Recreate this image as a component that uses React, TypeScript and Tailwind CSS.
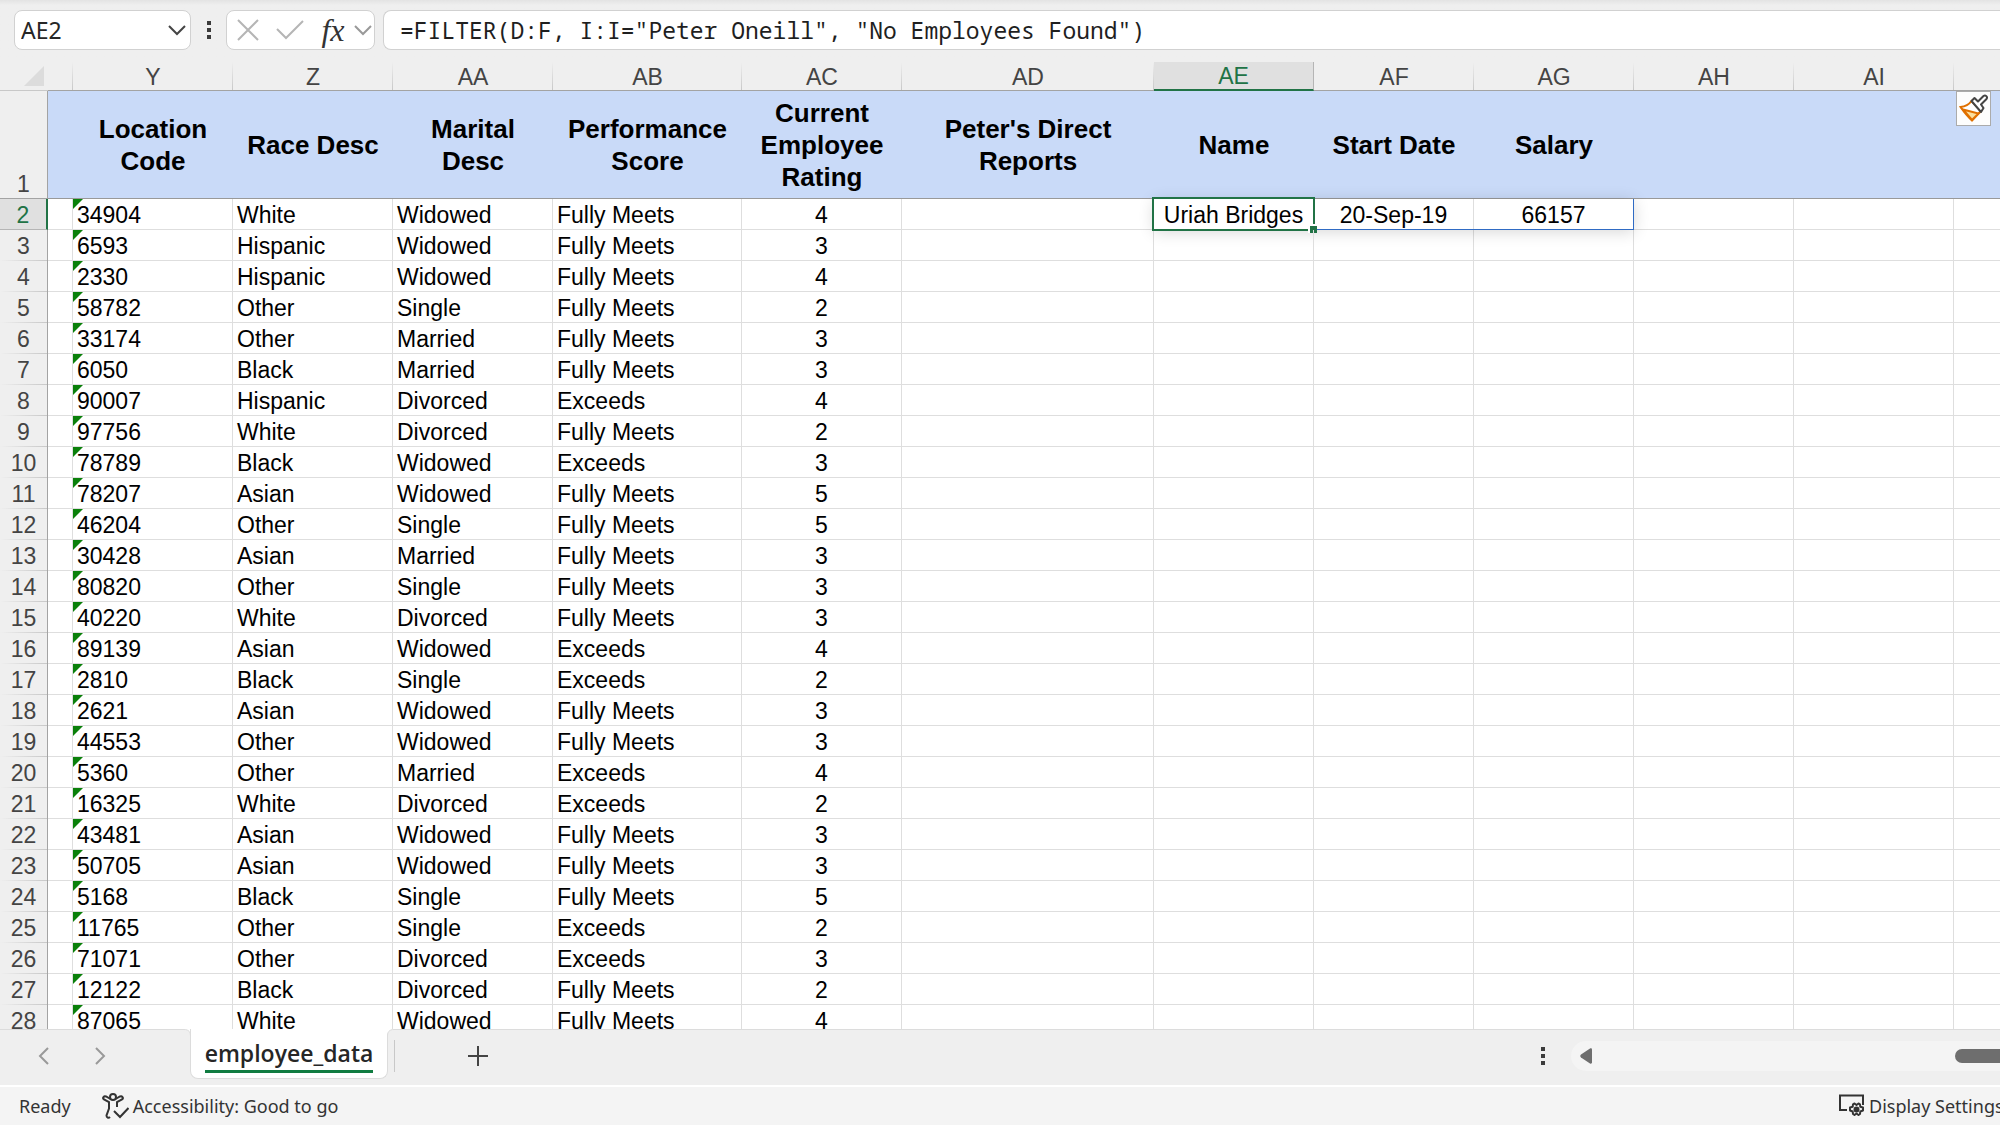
import React from 'react';

interface Employee {
  code: string;
  race: string;
  marital: string;
  score: string;
  rating: number;
}

const employees: Employee[] = [
  { code: '34904', race: 'White', marital: 'Widowed', score: 'Fully Meets', rating: 4 },
  { code: '6593', race: 'Hispanic', marital: 'Widowed', score: 'Fully Meets', rating: 3 },
  { code: '2330', race: 'Hispanic', marital: 'Widowed', score: 'Fully Meets', rating: 4 },
  { code: '58782', race: 'Other', marital: 'Single', score: 'Fully Meets', rating: 2 },
  { code: '33174', race: 'Other', marital: 'Married', score: 'Fully Meets', rating: 3 },
  { code: '6050', race: 'Black', marital: 'Married', score: 'Fully Meets', rating: 3 },
  { code: '90007', race: 'Hispanic', marital: 'Divorced', score: 'Exceeds', rating: 4 },
  { code: '97756', race: 'White', marital: 'Divorced', score: 'Fully Meets', rating: 2 },
  { code: '78789', race: 'Black', marital: 'Widowed', score: 'Exceeds', rating: 3 },
  { code: '78207', race: 'Asian', marital: 'Widowed', score: 'Fully Meets', rating: 5 },
  { code: '46204', race: 'Other', marital: 'Single', score: 'Fully Meets', rating: 5 },
  { code: '30428', race: 'Asian', marital: 'Married', score: 'Fully Meets', rating: 3 },
  { code: '80820', race: 'Other', marital: 'Single', score: 'Fully Meets', rating: 3 },
  { code: '40220', race: 'White', marital: 'Divorced', score: 'Fully Meets', rating: 3 },
  { code: '89139', race: 'Asian', marital: 'Widowed', score: 'Exceeds', rating: 4 },
  { code: '2810', race: 'Black', marital: 'Single', score: 'Exceeds', rating: 2 },
  { code: '2621', race: 'Asian', marital: 'Widowed', score: 'Fully Meets', rating: 3 },
  { code: '44553', race: 'Other', marital: 'Widowed', score: 'Fully Meets', rating: 3 },
  { code: '5360', race: 'Other', marital: 'Married', score: 'Exceeds', rating: 4 },
  { code: '16325', race: 'White', marital: 'Divorced', score: 'Exceeds', rating: 2 },
  { code: '43481', race: 'Asian', marital: 'Widowed', score: 'Fully Meets', rating: 3 },
  { code: '50705', race: 'Asian', marital: 'Widowed', score: 'Fully Meets', rating: 3 },
  { code: '5168', race: 'Black', marital: 'Single', score: 'Fully Meets', rating: 5 },
  { code: '11765', race: 'Other', marital: 'Single', score: 'Exceeds', rating: 2 },
  { code: '71071', race: 'Other', marital: 'Divorced', score: 'Exceeds', rating: 3 },
  { code: '12122', race: 'Black', marital: 'Divorced', score: 'Fully Meets', rating: 2 },
  { code: '87065', race: 'White', marital: 'Widowed', score: 'Fully Meets', rating: 4 },
];

const columns = [
  { id: 'Y', title: 'Location Code', width: 'w-[160px]' },
  { id: 'Z', title: 'Race Desc', width: 'w-[160px]' },
  { id: 'AA', title: 'Marital Desc', width: 'w-[160px]' },
  { id: 'AB', title: 'Performance Score', width: 'w-[189px]' },
  { id: 'AC', title: 'Current Employee Rating', width: 'w-[160px]' },
  { id: 'AD', title: "Peter's Direct Reports", width: 'w-[252px]' },
  { id: 'AE', title: 'Name', width: 'w-[160px]' },
  { id: 'AF', title: 'Start Date', width: 'w-[160px]' },
  { id: 'AG', title: 'Salary', width: 'w-[160px]' },
  { id: 'AH', title: '', width: 'w-[160px]' },
  { id: 'AI', title: '', width: 'w-[160px]' },
];

const cell = 'h-[31px] border-r border-b border-[#dedede] p-0 pt-[2px] leading-7 whitespace-nowrap';

const DotsIcon = () => (
  <svg width="4" height="20" viewBox="0 0 4 20" fill="#3b3b3b" aria-hidden="true">
    <rect y="1" width="4" height="4" />
    <rect y="8" width="4" height="4" />
    <rect y="15" width="4" height="4" />
  </svg>
);

const FormulaBar: React.FC = () => (
  <div className="flex h-[62px] shrink-0 bg-linear-to-b from-[#e3e3e3] to-[#efefef] to-[5px] pt-[10px] pl-[14px]">
    <div className="flex h-10 w-[177px] items-center justify-between rounded-lg border border-[#d1d1d1] bg-white pr-1 pl-[6px]">
      <input
        aria-label="Name Box"
        defaultValue="AE2"
        className="w-28 bg-transparent text-[23px] text-[#262626] outline-none"
      />
      <button aria-label="Name Box list">
        <svg width="18" height="12" viewBox="0 0 18 12" fill="none" stroke="#444" strokeWidth="2">
          <path d="M1 2l8 8 8-8" />
        </svg>
      </button>
    </div>
    <div className="flex h-10 w-[35px] items-center justify-center">
      <DotsIcon />
    </div>
    <div className="flex h-10 w-[149px] items-center rounded-lg border border-[#d1d1d1] bg-white pl-[9px]">
      <button aria-label="Cancel">
        <svg width="24" height="22" viewBox="0 0 24 22" fill="none" stroke="#b5b5b5" strokeWidth="2">
          <path d="M2 1l20 20M22 1L2 21" />
        </svg>
      </button>
      <button aria-label="Enter" className="ml-4">
        <svg width="28" height="22" viewBox="0 0 28 22" fill="none" stroke="#b5b5b5" strokeWidth="2">
          <path d="M1 10l9 9L27 2" />
        </svg>
      </button>
      <button
        aria-label="Insert Function"
        className="ml-4 w-[26px] font-['Liberation_Serif',serif] text-[32px] leading-8 font-medium text-[#333] italic"
      >
        fx
      </button>
      <button aria-label="Function list" className="ml-2">
        <svg width="18" height="12" viewBox="0 0 18 12" fill="none" stroke="#999" strokeWidth="2">
          <path d="M1 2l8 8 8-8" />
        </svg>
      </button>
    </div>
    <input
      aria-label="Formula Bar"
      defaultValue={'=FILTER(D:F, I:I="Peter Oneill", "No Employees Found")'}
      className="ml-2 h-10 min-w-0 flex-1 rounded-l-lg border border-r-0 border-[#d1d1d1] bg-white pl-4 font-['Noto_Sans_Mono','DejaVu_Sans_Mono',monospace] text-[23px] text-[#1f1f1f] outline-none"
    />
  </div>
);

const ErrorMark = () => (
  <svg className="absolute top-0 left-0" width="10" height="10" viewBox="0 0 10 10" aria-hidden="true">
    <path d="M0 0h10L0 10z" fill="#0a800a" />
  </svg>
);

// Outline of the spilled range with the active cell on top of it
const Selection = () => (
  <>
    <span className="pointer-events-none absolute top-0 left-0 h-[31px] w-[480px] border-r border-b border-[#2f6bc4] shadow-[0_2px_16px_rgba(0,0,0,0.16)]" />
    <span className="pointer-events-none absolute -top-[2px] -left-[2px] h-[34px] w-[163px] border-2 border-[#217346]" />
    <span className="pointer-events-none absolute top-[25px] left-[154px] size-[9px] border-t-2 border-l-2 border-white bg-[#217346]" />
  </>
);

const Sheet: React.FC = () => (
  <table className="w-full table-fixed border-separate border-spacing-0 bg-white font-['Liberation_Sans',Arial,sans-serif] text-[23px] text-black">
    <colgroup>
      <col className="w-12" />
      <col className="w-[25px]" />
      {columns.map((c) => (
        <col key={c.id} className={c.width} />
      ))}
      <col />
    </colgroup>
    <thead>
      <tr className="bg-[#efefef] text-[#444]">
        <th aria-label="Select All" className="h-[29px] border-b border-[#c8c8c8] p-0">
          <svg className="ml-6" width="20" height="20" viewBox="0 0 20 20">
            <path d="M20 0v20H0z" fill="#dcdcdc" />
          </svg>
        </th>
        <th className="border-b border-[#a3a3a3] bg-linear-to-b from-[#efefef] to-[#c8c8c8] bg-[length:1px_100%] bg-right bg-no-repeat p-0" />
        {columns.map((c) =>
          c.id === 'AE' ? (
            <th
              key={c.id}
              scope="col"
              className="h-[29px] border-r border-b-2 border-r-[#b5b5b5] border-b-[#217346] bg-[#e0e0e0] p-0 pt-[2px] leading-[25px] font-normal text-[#217346]"
            >
              {c.id}
            </th>
          ) : (
            <th
              key={c.id}
              scope="col"
              className="h-[29px] border-b border-[#a3a3a3] bg-linear-to-b from-[#efefef] to-[#c8c8c8] bg-[length:1px_100%] bg-right bg-no-repeat p-0 pt-[2px] leading-[26px] font-normal"
            >
              {c.id}
            </th>
          ),
        )}
        <th className="border-b border-[#a3a3a3] p-0" />
      </tr>
    </thead>
    <tbody>
      <tr className="bg-[#c9daf8]">
        <th
          scope="row"
          className="h-[108px] border-r border-b border-[#a3a3a3] bg-[#efefef] p-0 align-bottom leading-7 font-normal text-[#444]"
        >
          1
        </th>
        <td className="border-b border-[#999] p-0" />
        {columns.map((c) => (
          <td
            key={c.id}
            className="border-b border-[#999] px-2 py-0 text-center align-middle text-[26px] leading-8 font-bold"
          >
            {c.title}
          </td>
        ))}
        <td className="relative border-b border-[#999] p-0">
          <button
            aria-label="Paste options"
            className="absolute top-0 left-[2px] flex size-[35px] items-center justify-center border border-[#ababab] bg-[#fdfdfd]"
          >
            <svg width="29" height="29" viewBox="0 0 29 29" fill="none" strokeWidth="2">
              <path d="M1.500 13C6 12.500 10 10.500 12.500 7l9.500 10c-3 3-5.500 6-9 9.500C9 23 5 18 1.500 13z" fill="#fff" stroke="#e07000" />
              <path d="M4 15.500l15.500 4-6.500 6.500z" fill="#fbdf9e" stroke="#e07000" />
              <path d="M12.500 7l3-3 3.500 3.500L24.500 2c2-1.500 4.500.800 3 3L22 10.500l2.500 3.500-2.500 4z" fill="#fff" stroke="#444" strokeLinejoin="round" />
            </svg>
          </button>
        </td>
      </tr>
      {employees.map((e, i) => (
        <tr key={e.code}>
          {i === 0 ? (
            <th
              scope="row"
              className="h-[31px] border-r-2 border-b border-r-[#217346] border-b-[#b5b5b5] bg-[#e0e0e0] p-0 pt-[2px] leading-7 font-normal text-[#217346]"
            >
              2
            </th>
          ) : (
            <th
              scope="row"
              className="h-[31px] border-r border-[#a3a3a3] bg-[#efefef] bg-linear-to-r from-[#efefef] to-[#c8c8c8] bg-[length:100%_1px] bg-bottom bg-no-repeat p-0 pt-px leading-7 font-normal text-[#444]"
            >
              {i + 2}
            </th>
          )}
          <td className={cell} />
          <td className={`${cell} relative pl-1`}>
            <ErrorMark />
            {e.code}
          </td>
          <td className={`${cell} pl-1`}>{e.race}</td>
          <td className={`${cell} pl-1`}>{e.marital}</td>
          <td className={`${cell} pl-1`}>{e.score}</td>
          <td className={`${cell} text-center`}>{e.rating}</td>
          <td className={cell} />
          <td className={`${cell} relative text-center`}>
            {i === 0 && (
              <>
                Uriah Bridges
                <Selection />
              </>
            )}
          </td>
          <td className={`${cell} text-center`}>{i === 0 && '20-Sep-19'}</td>
          <td className={`${cell} text-center`}>{i === 0 && '66157'}</td>
          <td className={cell} />
          <td className={cell} />
          <td className={`${cell} border-r-0`} />
        </tr>
      ))}
    </tbody>
  </table>
);

const SheetTabs: React.FC = () => (
  <div className="flex h-14 shrink-0 items-start">
    <div className="flex h-[53px] w-[184px] items-center border-t border-[#dcdcdc] pl-[38px]">
      <button aria-label="Previous sheet">
        <svg width="11" height="18" viewBox="0 0 11 18" fill="none" stroke="#999" strokeWidth="2">
          <path d="M10 1L2 9l8 8" />
        </svg>
      </button>
      <button aria-label="Next sheet" className="ml-[46px]">
        <svg width="11" height="18" viewBox="0 0 11 18" fill="none" stroke="#999" strokeWidth="2">
          <path d="M1 1l8 8-8 8" />
        </svg>
      </button>
    </div>
    <svg className="-mr-px" width="7" height="8" viewBox="0 0 7 8" aria-hidden="true">
      <path d="M0 0h7v8C7 3 5 .500 0 .500z" fill="#fff" />
      <path d="M0 .500C5 .500 6.500 3 6.500 8" fill="none" stroke="#dcdcdc" />
    </svg>
    <div className="h-[50px] w-[198px] rounded-b-lg border border-t-0 border-[#dcdcdc] bg-white text-center">
      <button className="h-11 border-b-[3px] border-[#107c41] font-['Open_Sans',sans-serif] text-[23px] leading-[48px] font-semibold text-[#262626]">
        employee_data
      </button>
    </div>
    <svg className="-ml-px" width="7" height="8" viewBox="0 0 7 8" aria-hidden="true">
      <path d="M7 0H0v8C0 3 2 .500 7 .500z" fill="#fff" />
      <path d="M7 .500C2 .500 .500 3 .500 8" fill="none" stroke="#dcdcdc" />
    </svg>
    <div className="flex h-[53px] min-w-0 flex-1 items-center border-t border-[#dcdcdc]">
      <span className="h-8 w-px bg-[#c8c8c8]" />
      <button aria-label="New sheet" className="ml-[73px]">
        <svg width="20" height="20" viewBox="0 0 20 20" fill="none" stroke="#444" strokeWidth="2">
          <path d="M10 0v20M0 10h20" />
        </svg>
      </button>
      <div className="ml-auto flex items-center">
        <DotsIcon />
        <div className="ml-[26px] flex h-[30px] w-[429px] items-center justify-between rounded-l-full bg-[#f4f4f4] pl-[9px]">
          <button aria-label="Scroll left">
            <svg width="12" height="16" viewBox="0 0 12 16" fill="#6e6e6e">
              <path d="M10 .500c1-.500 2 0 2 1v13c0 1-1 1.500-2 1L1 9.500c-1-.800-1-2.200 0-3z" />
            </svg>
          </button>
          <span className="h-[14px] w-[45px] rounded-l-full bg-[#6e6e6e]" />
        </div>
      </div>
    </div>
  </div>
);

const StatusBar: React.FC = () => (
  <div className="flex h-10 shrink-0 items-center border-t-2 border-white bg-[#f4f4f4] pl-[19px] text-[18px] text-[#333]">
    <span>Ready</span>
    <button className="ml-[31px] flex items-center gap-1">
      <svg width="27" height="26" viewBox="0 0 27 26" fill="none" stroke="#333" strokeWidth="2">
        <circle cx="11" cy="4" r="3" />
        <path d="M8.500 6L4 3.500C2 2.500 0 5 2 6.500L7 9v6.500l-2.500 7c0 2 2 3 3.500 1.500" />
        <path d="M13.500 6L18 3.500c2-1 4 1.500 2 3L15 9v5" />
        <path d="M12 18l6 6 8.500-9" />
      </svg>
      Accessibility: Good to go
    </button>
    <button className="ml-auto flex w-[161px] items-center gap-1 overflow-hidden whitespace-nowrap">
      <svg className="shrink-0" width="26" height="24" viewBox="0 0 26 24" fill="none" stroke="#333" strokeWidth="2">
        <path d="M8 16H1V1.500h23V11" />
        <path
          d="M15.500 9.500l2 1.500 2-1.500 1.500.800.300 2.500 2.700.700v3l-2.700 1-.300 2.500-1.500 1-2-1.500-2 1.500-1.500-1-.300-2.500-2.700-1v-3l2.700-.700.300-2.500z"
          strokeLinejoin="round"
        />
        <circle cx="17.500" cy="15.500" r="2" fill="#333" />
      </svg>
      Display Settings
    </button>
  </div>
);

export default function App() {
  return (
    <div className="flex h-screen flex-col overflow-hidden bg-[#efefef] font-['Noto_Sans',sans-serif]">
      <FormulaBar />
      <main className="min-h-0 flex-1 overflow-hidden">
        <Sheet />
      </main>
      <SheetTabs />
      <StatusBar />
    </div>
  );
}
